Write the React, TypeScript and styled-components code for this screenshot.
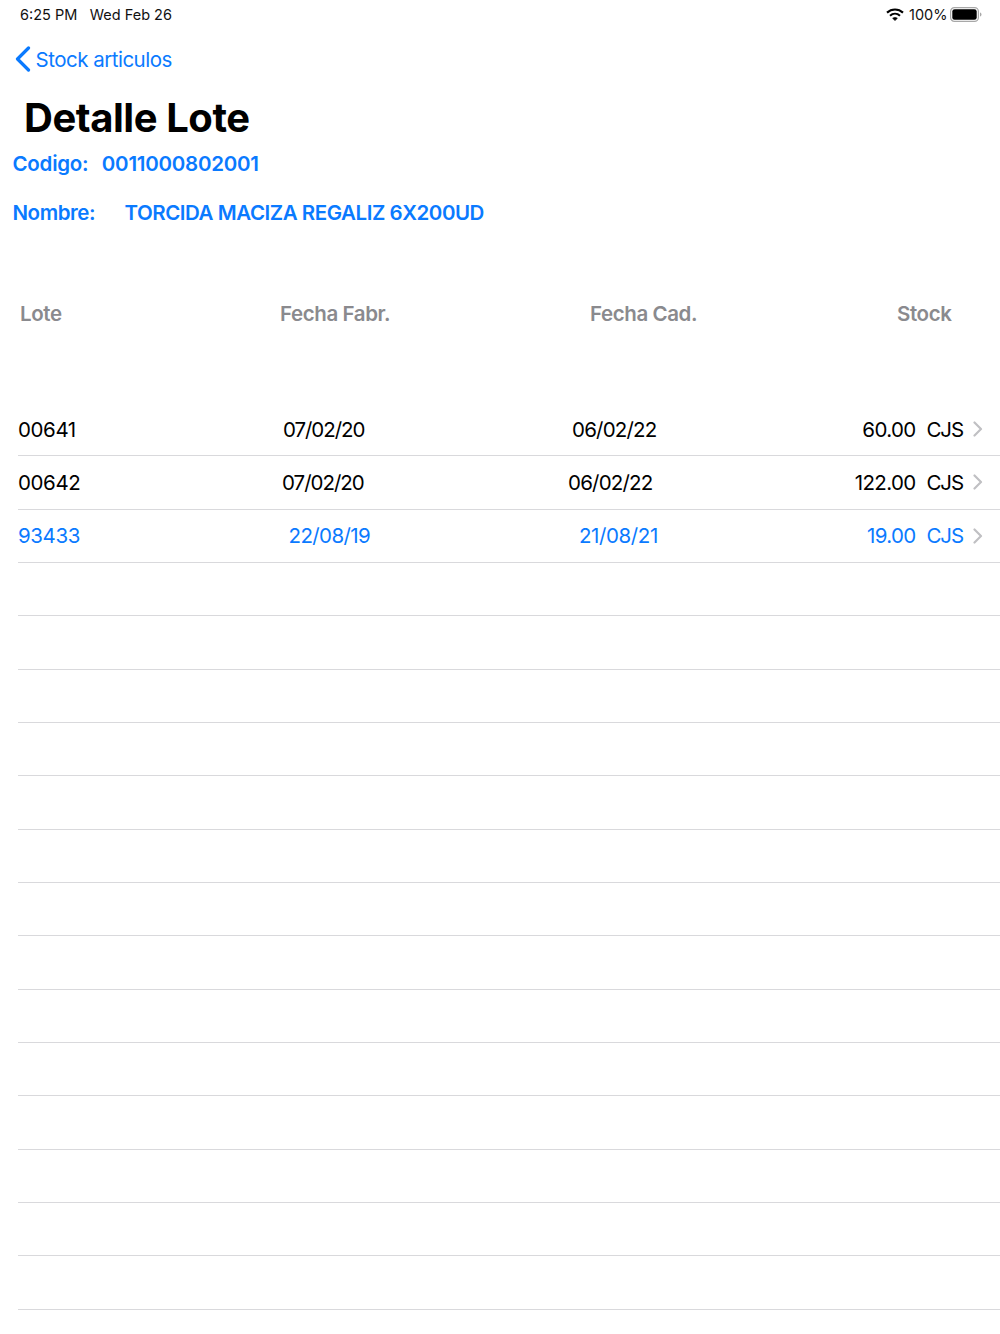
import React from "react";
import styled, { createGlobalStyle } from "styled-components";

const Global = createGlobalStyle`
  html, body { margin: 0; padding: 0; background: #fff; }
  body { font-family: Inter, "Noto Sans", "Liberation Sans", sans-serif; color: #000; }
`;
const Page = styled.div`
  width: 1000px; height: 1334px; overflow: hidden; background: #fff; display: flex; flex-direction: column;
`;
const StatusBar = styled.div`
  height: 29px; padding: 0 18px 0 20px; display: flex; align-items: center; justify-content: space-between;
  font-size: 14.5px; letter-spacing: 0; color: #111;
`;
const StatusLeft = styled.div`display: flex; gap: 12.5px;`;
const StatusRight = styled.div`display: flex; align-items: center; gap: 4px;`;
const Percent = styled.span`margin-left: 1px; margin-right: -1.5px;`;
const NavBar = styled.a`
  height: 60px; padding-left: 15px; display: flex; align-items: center; gap: 4.5px;
  color: #0a7aff; font-size: 20.5px; letter-spacing: -0.5px;
`;
const Title = styled.h1`
  margin: 5px 0 0; padding-left: 24px; font-size: 40px; line-height: 48px; font-weight: 700; letter-spacing: -0.45px; color: #000;
`;
const Info = styled.div<{ $gap: number; $top: number; $tight?: boolean }>`
  margin-top: ${(p) => p.$top}px; padding-left: 12.5px; display: flex; gap: ${(p) => p.$gap}px;
  color: #0a7aff; font-size: 20.5px; line-height: 28px; font-weight: 600;
  letter-spacing: ${(p) => (p.$tight ? "-0.45px" : "-0.25px")};
`;
const HeaderRow = styled.div`
  margin-top: 73px; height: 28px; display: grid; grid-template-columns: 280px 310px 307px 1fr;
  color: #8a8a8e; font-size: 20.5px; line-height: 28px; font-weight: 600; letter-spacing: -0.4px;
`;
const HeaderCell = styled.div<{ $inset?: number }>`
  padding-left: ${(p) => p.$inset ?? 0}px; white-space: nowrap;
`;
const List = styled.div`margin-top: 75px; margin-left: 18px; display: flex; flex-direction: column;`;
const Row = styled.div<{ $blue?: boolean }>`
  height: 53.33px; box-sizing: border-box; border-bottom: 1px solid #d9d9dc;
  display: grid; grid-template-columns: 245px 290px 1fr auto 37px; align-items: center;
  color: ${(p) => (p.$blue ? "#0a7aff" : "#000")};
  font-size: 20.5px; letter-spacing: -0.4px; white-space: nowrap;
`;
const Cell = styled.div<{ $inset?: number }>`padding-left: ${(p) => p.$inset ?? 0}px;`;
const DateCell = styled(Cell)<{ $track: number }>`letter-spacing: ${(p) => p.$track}px;`;
const Stock = styled.div`display: flex; justify-content: flex-end; gap: 11px;`;
const Qty = styled.span`letter-spacing: -0.65px;`;
const Unit = styled.span`letter-spacing: -1.1px;`;
const Chevron = styled.div`display: flex; justify-content: flex-start; padding-left: 10px;`;

const rows = [
  { lote: "00641", fab: "07/02/20", fabI: 20, fabT: -1.05, cad: "06/02/22", cadI: 19, cadT: -0.8, qty: "60.00" },
  { lote: "00642", fab: "07/02/20", fabI: 19, fabT: -1, cad: "06/02/22", cadI: 15, cadT: -0.8, qty: "122.00" },
  { lote: "93433", fab: "22/08/19", fabI: 25.5, fabT: -0.6, cad: "21/08/21", cadI: 26, cadT: -0.4, qty: "19.00", blue: true },
];

export default function App() {
  return (
    <Page>
      <Global />
      <StatusBar>
        <StatusLeft><span>6:25 PM</span><span>Wed Feb 26</span></StatusLeft>
        <StatusRight>
          <svg width="18" height="13" viewBox="0 0 18 13" fill="none" stroke="#000" strokeWidth="2.1">
            <path d="M1 4.6C5.6 .4 12.4 .4 17 4.6" />
            <path d="M4 7.7c2.9-2.6 7.1-2.6 10 0" />
            <path d="M9 12.6 6.6 10.3c1.4-1.2 3.4-1.2 4.8 0z" fill="#000" strokeWidth="0.6" />
          </svg>
          <Percent>100%</Percent>
          <svg width="32" height="15" viewBox="0 0 32 15">
            <rect x="0.6" y="0.6" width="27.8" height="13.8" rx="3.8" fill="none" stroke="#a8a8a8" strokeWidth="1.2" />
            <rect x="2.300" y="2.300" width="24.400" height="10.400" rx="2.300" fill="#000" />
            <path d="M30 5.500v4c.9-.3 1.500-1.100 1.500-2s-.6-1.700-1.500-2z" fill="#a8a8a8" />
          </svg>
        </StatusRight>
      </StatusBar>
      <NavBar>
        <svg width="16" height="26" viewBox="0 0 16 26" fill="none" stroke="#0a7aff" strokeWidth="3.2" strokeLinecap="round" strokeLinejoin="round">
          <path d="M13.500 2 2.500 13l11 11" />
        </svg>
        Stock articulos
      </NavBar>
      <Title>Detalle Lote</Title>
      <Info $gap={13.5} $top={8}><span>Codigo:</span><span>0011000802001</span></Info>
      <Info $gap={29.5} $top={21} $tight><span>Nombre:</span><span>TORCIDA MACIZA REGALIZ 6X200UD</span></Info>
      <HeaderRow>
        <HeaderCell $inset={20}>Lote</HeaderCell>
        <HeaderCell>Fecha Fabr.</HeaderCell>
        <HeaderCell>Fecha Cad.</HeaderCell>
        <HeaderCell>Stock</HeaderCell>
      </HeaderRow>
      <List>
        {Array.from({ length: 17 }).map((_, i) => {
          const r = rows[i];
          if (!r) return <Row key={i} />;
          return (
            <Row key={i} $blue={r.blue}>
              <Cell>{r.lote}</Cell>
              <DateCell $inset={r.fabI} $track={r.fabT}>{r.fab}</DateCell>
              <DateCell $inset={r.cadI} $track={r.cadT}>{r.cad}</DateCell>
              <Stock><Qty>{r.qty}</Qty><Unit>CJS</Unit></Stock>
              <Chevron>
                <svg width="10" height="16" viewBox="0 0 10 16" fill="none" stroke="#c0c0c3" strokeWidth="2.2" strokeLinecap="round" strokeLinejoin="round">
                  <path d="M1.500 1.500 8 8l-6.500 6.500" />
                </svg>
              </Chevron>
            </Row>
          );
        })}
      </List>
    </Page>
  );
}
